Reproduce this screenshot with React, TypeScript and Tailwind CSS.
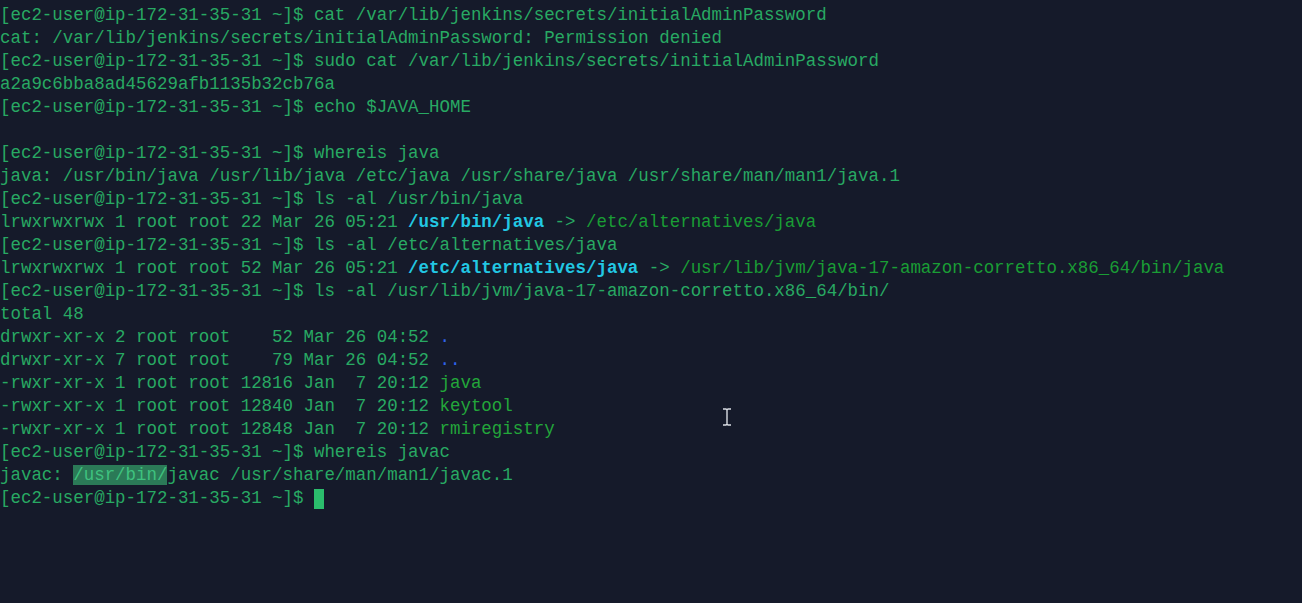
import React from 'react';

type Seg = { t: string; c?: string };

const PROMPT = '[ec2-user@ip-172-31-35-31 ~]$ ';

const g = 'text-[#28a963]';
const cyan = 'text-[#22c7e3] font-bold';
const link = 'text-[#1a9d35]';
const file = 'text-[#23a63a]';
const dir = 'text-[#2f63ea]';

const lines: Seg[][] = [
  [{ t: PROMPT + 'cat /var/lib/jenkins/secrets/initialAdminPassword' }],
  [{ t: 'cat: /var/lib/jenkins/secrets/initialAdminPassword: Permission denied' }],
  [{ t: PROMPT + 'sudo cat /var/lib/jenkins/secrets/initialAdminPassword' }],
  [{ t: 'a2a9c6bba8ad45629afb1135b32cb76a' }],
  [{ t: PROMPT + 'echo $JAVA_HOME' }],
  [{ t: '' }],
  [{ t: PROMPT + 'whereis java' }],
  [{ t: 'java: /usr/bin/java /usr/lib/java /etc/java /usr/share/java /usr/share/man/man1/java.1' }],
  [{ t: PROMPT + 'ls -al /usr/bin/java' }],
  [
    { t: 'lrwxrwxrwx 1 root root 22 Mar 26 05:21 ' },
    { t: '/usr/bin/java', c: cyan },
    { t: ' -> ' },
    { t: '/etc/alternatives/java', c: link },
  ],
  [{ t: PROMPT + 'ls -al /etc/alternatives/java' }],
  [
    { t: 'lrwxrwxrwx 1 root root 52 Mar 26 05:21 ' },
    { t: '/etc/alternatives/java', c: cyan },
    { t: ' -> ' },
    { t: '/usr/lib/jvm/java-17-amazon-corretto.x86_64/bin/java', c: link },
  ],
  [{ t: PROMPT + 'ls -al /usr/lib/jvm/java-17-amazon-corretto.x86_64/bin/' }],
  [{ t: 'total 48' }],
  [{ t: 'drwxr-xr-x 2 root root    52 Mar 26 04:52 ' }, { t: '.', c: dir }],
  [{ t: 'drwxr-xr-x 7 root root    79 Mar 26 04:52 ' }, { t: '..', c: dir }],
  [{ t: '-rwxr-xr-x 1 root root 12816 Jan  7 20:12 ' }, { t: 'java', c: file }],
  [{ t: '-rwxr-xr-x 1 root root 12840 Jan  7 20:12 ' }, { t: 'keytool', c: file }],
  [{ t: '-rwxr-xr-x 1 root root 12848 Jan  7 20:12 ' }, { t: 'rmiregistry', c: file }],
  [{ t: PROMPT + 'whereis javac' }],
  [
    { t: 'javac: ' },
    { t: '/usr/bin/', c: 'bg-[#2b7a57] text-[#3fc27f]' },
    { t: 'javac /usr/share/man/man1/javac.1' },
  ],
];

export default function App() {
  return (
    <div className="relative w-[1302px] h-[603px] overflow-hidden bg-[#151a2a] pt-[4px]">
      <div
        className={`whitespace-pre text-[17.44px] leading-[23px] ${g}`}
        style={{ fontFamily: '"Liberation Mono", "DejaVu Sans Mono", monospace' }}
      >
        {lines.map((segs, i) => (
          <div key={i} className="h-[23px]">
            {segs.map((s, j) => (
              <span key={j} className={s.c}>
                {s.t}
              </span>
            ))}
          </div>
        ))}
        <div className="h-[23px] flex items-center">
          <span>{PROMPT}</span>
          <span className="inline-block w-[10px] h-[20px] bg-[#2bbd6c]" />
        </div>
      </div>

      {/* mouse I-beam */}
      <svg
        className="absolute left-[722px] top-[408px]"
        width="10"
        height="18"
        viewBox="0 0 10 18"
      >
        <path d="M1 1h3l1 1 1-1h3M5 2v14M1 17h3l1-1 1 1h3" stroke="#d9dde3" strokeWidth="1.4" fill="none" />
      </svg>
    </div>
  );
}
